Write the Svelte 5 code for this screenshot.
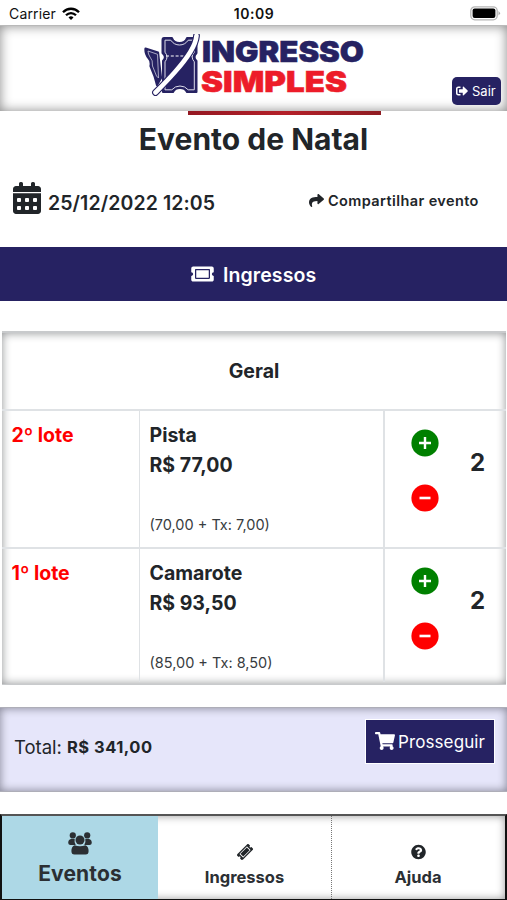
<script>
  const tickets = [
    { lot: '2º lote', name: 'Pista', price: 'R$ 77,00', detail: '(70,00 + Tx: 7,00)', qty: 2 },
    { lot: '1º lote', name: 'Camarote', price: 'R$ 93,50', detail: '(85,00 + Tx: 8,50)', qty: 2 }
  ];
  const days = [[64, 268], [192, 268], [320, 268], [64, 396], [192, 396], [320, 396]];
  const ticketPath =
    'M128 160h320v192H128V160zm400 96c0 26.51 21.49 48 48 48v96c0 26.51-21.49 48-48 48H48c-26.51 0-48-21.49-48-48v-96c26.51 0 48-21.49 48-48s-21.49-48-48-48v-96c0-26.51 21.49-48 48-48h480c26.51 0 48 21.49 48 48v96c-26.51 0-48 21.49-48 48zm-48-104c0-13.255-10.745-24-24-24H120c-13.255 0-24 10.745-24 24v208c0 13.255 10.745 24 24 24h336c13.255 0 24-10.745 24-24V152z';
</script>

<div class="app">
  <div class="status">
    <div class="carrier">
      <span>Carrier</span>
      <svg width="18" height="14" viewBox="0 0 18 14" fill="none" stroke="#000" stroke-width="2.3">
        <path d="M1 5.2C5.4 .6 12.600 .6 17 5.200" />
        <path d="M4 8.300C6.900 5.400 11.100 5.400 14 8.300" />
        <path d="M6.500 10.400Q9 8.300 11.500 10.400L9 13Z" fill="#000" stroke="none" />
      </svg>
    </div>
    <b>10:09</b>
    <div class="battery">
      <svg width="31" height="15" viewBox="0 0 31 15">
        <rect x=".8" y=".8" width="26.400" height="13" rx="4" fill="#fff" stroke="#b5b5b5" stroke-width="1.300" />
        <rect x="2.600" y="2.500" width="22.800" height="9.600" rx="2" />
        <path d="M28.500 5v4.500q3-2.200 0-4.500z" fill="#aaa" />
      </svg>
    </div>
  </div>

  <header>
    <svg class="logo" width="224" height="66" viewBox="0 0 224 66">
      <g stroke="#262262" stroke-linejoin="round">
        <path d="M1.500 14.500L14 18.500 17 44 13 51 10.500 42 6.500 32Q7.500 27 4.500 24Q1 20 1.500 14.500Z" fill="#262262" stroke-width="2.200" />
        <path d="M4 17L13.500 20.300 14.500 44 12.500 42 8.500 32Q9 26 6 23Q4 20 4 17Z" fill="none" stroke="#c9c8dc" stroke-width=".8" />
        <path d="M20 4H28Q30 9 35.500 9Q41 9 43 4H52.500V19Q48.500 23 52.500 27V58H43Q41 54 36 54Q31 54 29 58H19V27Q23 23 18.500 19V6Q18.500 4 20 4Z" fill="#262262" stroke-width="2" />
        <path d="M21 6.200H26.800Q30 11 35.500 11Q41 11 44.200 6.200H50.300V18.200Q46 23 50.300 27.800V55.800H44.200Q41 52 36 52Q31 52 27.800 55.800H21V27.800Q25 23 21 18.200Z" fill="#262262" stroke="#dddcea" stroke-width="1" />
        <path d="M22 22H48" stroke="#fff" stroke-width="1.100" stroke-dasharray="3 1.800" />
        <path d="M52.500 1.800C51.500 14 40 28 30.500 38.500C23 47 17 53 11.500 58.500" fill="none" stroke-width="6.800" stroke-linecap="round" />
        <path d="M52.500 1.800C51.500 14 40 28 30.500 38.500C23 47 17 53 11.500 58.500" fill="none" stroke="#fff" stroke-width="4.600" stroke-linecap="round" />
      </g>
      <text x="58" y="27.800" textLength="162" lengthAdjust="spacingAndGlyphs" fill="#262262" stroke="#262262" stroke-width=".5">INGRESSO</text>
      <text x="57" y="57.500" textLength="146" lengthAdjust="spacingAndGlyphs" fill="#ed1c29" stroke="#ed1c29" stroke-width=".5">SIMPLES</text>
    </svg>
    <button class="exit">
      <svg width="12" height="12" viewBox="0 0 512 512" fill="#fff"><path d="M497 273L329 441c-15 15-41 4.500-41-17v-96H152c-13.300 0-24-10.700-24-24v-96c0-13.300 10.700-24 24-24h136V88c0-21.400 25.900-32 41-17l168 168c9.300 9.400 9.300 24.600 0 34zM192 436v-40c0-6.600-5.400-12-12-12H96c-17.700 0-32-14.300-32-32V160c0-17.700 14.300-32 32-32h84c6.600 0 12-5.400 12-12V76c0-6.600-5.400-12-12-12H96c-53 0-96 43-96 96v192c0 53 43 96 96 96h84c6.600 0 12-5.400 12-12z" /></svg>
      <span>Sair</span>
    </button>
  </header>

  <div class="banner"></div>
  <h1><span>Evento de Natal</span></h1>

  <div class="meta">
    <svg width="28" height="32" viewBox="0 0 448 512" fill="#212529">
      <path d="M0 464c0 26.500 21.500 48 48 48h352c26.500 0 48-21.500 48-48V180H0zM400 64h-48V24a24 24 0 0 0-24-24h-16a24 24 0 0 0-24 24v40H160V24a24 24 0 0 0-24-24h-16a24 24 0 0 0-24 24v40H48C21.500 64 0 85.500 0 112v48h448v-48c0-26.500-21.500-48-48-48z" />
      {#each days as [x, y]}
        <rect {x} y={y - 14} width="64" height="64" rx="14" fill="#fff" />
      {/each}
    </svg>
    <span class="date">25/12/2022 12:05</span>
    <div class="share">
      <svg width="15" height="15" viewBox="0 0 512 512" fill="#212529"><path d="M503.691 189.836L327.687 37.851C312.281 24.546 288 35.347 288 56.015v80.053C127.371 137.907 0 170.100 0 322.326c0 61.441 39.581 122.309 83.333 154.132 13.653 9.931 33.111-2.533 28.077-18.631C66.066 312.814 132.917 274.316 288 272.085V360c0 20.700 24.300 31.453 39.687 18.164l176.004-152c11.071-9.562 11.086-26.753 0-36.328z" /></svg>
      <span>Compartilhar evento</span>
    </div>
  </div>

  <div class="section">
    <svg width="23" height="20" viewBox="0 0 576 512" fill="#fff"><path d={ticketPath} /></svg>
    <span>Ingressos</span>
  </div>

  <div class="table">
    <div class="sector">Geral</div>
    {#each tickets as t}
      <div class="row">
        <div class="lot">{t.lot}</div>
        <div class="info">
          <div class="name">{t.name}</div>
          <div class="price">{t.price}</div>
          <div class="detail">{t.detail}</div>
        </div>
        <div class="qty">
          <div class="steps">
            <svg width="28" height="28" viewBox="0 0 28 28"><circle cx="14" cy="14" r="13.600" fill="#008000" /><path d="M14 8v12M8 14h12" stroke="#fff" stroke-width="2.400" /></svg>
            <svg width="28" height="28" viewBox="0 0 28 28"><circle cx="14" cy="14" r="13.600" fill="#f00" /><path d="M8.500 14h11" stroke="#fff" stroke-width="2.600" /></svg>
          </div>
          <b>{t.qty}</b>
        </div>
      </div>
    {/each}
  </div>

  <div class="total">
    <div class="sum"><span>Total:</span><b>R$ 341,00</b></div>
    <button class="go">
      <svg width="20" height="18" viewBox="0 0 576 512" fill="#fff"><path d="M528.120 301.319l47.273-208C578.806 78.301 567.391 64 551.990 64H159.208l-9.166-44.810C147.758 8.021 137.930 0 126.529 0H24C10.745 0 0 10.745 0 24v16c0 13.255 10.745 24 24 24h69.883l70.248 343.435C147.325 417.100 136 435.222 136 456c0 30.928 25.072 56 56 56s56-25.072 56-56c0-15.674-6.447-29.835-16.824-40h209.647C430.447 426.165 424 440.326 424 456c0 30.928 25.072 56 56 56s56-25.072 56-56c0-22.172-12.888-41.332-31.579-50.405l5.517-24.276c3.413-15.018-8.002-29.319-23.403-29.319H218.117l-6.545-32h293.145c11.206 0 20.920-7.754 23.403-18.681z" /></svg>
      <span>Prosseguir</span>
    </button>
  </div>

  <nav>
    <div class="tab active">
      <svg width="24" height="23" viewBox="0 0 24 23" fill="#2b2f33">
        <circle cx="4.800" cy="3.400" r="3.100" />
        <circle cx="19.200" cy="3.400" r="3.100" />
        <circle cx="12" cy="8" r="4.500" />
        <path d="M6.700 7.100H3Q.2 7.600 .2 11Q.4 13 2.500 13H7.700Q6 10 6.700 7.100ZM17.300 7.100H21Q23.800 7.600 23.800 11Q23.600 13 21.500 13H16.300Q18 10 17.300 7.100ZM6.700 13.200Q9 14.200 12 14.200Q15 14.200 17.300 13.200Q20.600 14.500 20.600 19Q20.600 22.500 17.600 22.500H6.400Q3.400 22.500 3.400 19Q3.400 14.500 6.700 13.200Z" />
      </svg>
      <span>Eventos</span>
    </div>
    <div class="tab">
      <svg width="18" height="18" viewBox="0 0 18 18">
        <g transform="rotate(-45 9 9) translate(.9 3.800) scale(.0281 .0205)" fill="#212529"><path d={ticketPath} /></g>
      </svg>
      <span>Ingressos</span>
    </div>
    <div class="tab">
      <svg width="15" height="18" viewBox="0 0 512 512" fill="#212529"><path d="M504 256c0 136.997-111.043 248-248 248S8 392.997 8 256C8 119.083 119.043 8 256 8s248 111.083 248 248zM262.655 90c-54.497 0-89.255 22.957-116.549 63.758-3.536 5.286-2.353 12.415 2.715 16.258l34.699 26.310c5.205 3.947 12.621 3.008 16.665-2.122 17.864-22.658 30.113-35.797 57.303-35.797 20.429 0 45.698 13.148 45.698 32.958 0 14.976-12.363 22.667-32.534 33.976C247.128 238.528 216 254.941 216 296v4c0 6.627 5.373 12 12 12h56c6.627 0 12-5.373 12-12v-1.333c0-28.462 83.186-29.647 83.186-106.667 0-58.002-60.165-102-116.531-102zM256 338c-25.365 0-46 20.635-46 46 0 25.364 20.635 46 46 46s46-20.636 46-46c0-25.365-20.635-46-46-46z" /></svg>
      <span>Ajuda</span>
    </div>
  </nav>
</div>

<style>
  * { box-sizing: border-box; }
  .app {
    width: 507px;
    height: 900px;
    overflow: hidden;
    display: flex;
    flex-direction: column;
    background: #fff;
    color: #212529;
    font-family: Inter, "Liberation Sans", sans-serif;
    white-space: nowrap;
  }
  svg { display: block; flex: none; }
  button { border: 0; font-family: inherit; color: #fff; background: #262262; }
  .status { height: 25px; display: flex; align-items: center; padding: 2px 6px 0 9px; flex: none; color: #111; }
  .carrier { width: 210px; display: flex; gap: 6px; align-items: center; font-size: 14px; letter-spacing: .15px; }
  .status b { width: 70px; text-align: center; font-size: 14px; font-weight: 600; letter-spacing: .55px; }
  .battery { flex: 1; display: flex; justify-content: flex-end; }
  header {
    height: 86px;
    flex: none;
    display: flex;
    justify-content: space-between;
    align-items: flex-start;
    padding: 8px 6px 0 144px;
    background: #fff;
    border-top: 1px solid #b9b9b9;
    box-shadow: inset 0 0 12px 0 #888;
  }
  .logo { font-weight: 900; font-size: 28.500px; }
  .exit { width: 49px; height: 28px; margin-top: 43px; border-radius: 5px; display: flex; align-items: center; gap: 4px; padding: 0 0 0 4px; font-size: 13px; }
  .banner { width: 193px; height: 4px; margin-left: 188px; background: linear-gradient(90deg, #941822, #b42029 50%, #8f1c22); flex: none; }
  h1 { margin: 0; height: 47px; text-align: center; font-size: 30px; line-height: 48px; font-weight: 700; flex: none; }
  .meta { height: 85px; flex: none; display: flex; align-items: flex-start; padding: 20px 0 0 13px; }
  .date { margin: 9px 0 0 7px; width: 261px; font-size: 19.500px; line-height: 24px; font-weight: 600; letter-spacing: .1px; }
  .share { display: flex; align-items: center; gap: 4px; margin-top: 9px; font-size: 14.500px; line-height: 20px; font-weight: 600; letter-spacing: .4px; }
  .share svg { margin-top: -2px; }
  .section { height: 54px; flex: none; background: #262262; color: #fff; display: flex; align-items: center; padding: 1px 0 0 191px; gap: 9px; font-size: 19.500px; font-weight: 600; letter-spacing: .1px; }
  .section svg { margin-top: -2px; }
  .table {
    width: 504px;
    height: 354px;
    margin: 30px 0 0 2px;
    flex: none;
    border-top: 2px solid #c8cacc;
    border-bottom: 1px solid #c8cacc;
    box-shadow: inset 0 0 10px 0 #8e9092;
    font-weight: 650;
  }
  .sector { height: 76px; text-align: center; font-size: 19.500px; line-height: 76px; }
  .row { height: 138px; display: flex; border-top: 2px solid #dfe2e5; font-size: 19.500px; line-height: 29.500px; }
  .row:last-child { height: 135px; }
  .lot { width: 137px; padding: 10px 0 0 9.500px; color: #f00; }
  .info { width: 246px; padding: 10px 0 0 9.500px; border-left: 1px solid #dfe2e5; border-right: 2px solid #dfe2e5; }
  .detail { margin-top: 30px; font-size: 14.500px; font-weight: 400; color: #383c40; }
  .qty { display: flex; padding: 18px 0 0 26px; }
  .steps { display: flex; flex-direction: column; gap: 27px; }
  .qty b { margin: 19px 0 0 31px; font-size: 24px; font-weight: 650; }
  .total {
    height: 85px;
    margin-top: 22px;
    flex: none;
    display: flex;
    justify-content: space-between;
    padding: 13px 13px 0 14px;
    background: #e6e6fa;
    border-top: 1px solid #aeaeb8;
    border-bottom: 1px solid #aeaeb8;
    box-shadow: inset 0 0 10px 0 #808090;
  }
  .sum { display: flex; gap: 5px; height: 52px; align-items: center; font-size: 18.500px; }
  .sum b { font-size: 16.500px; font-weight: 700; letter-spacing: .5px; }
  .go { width: 128px; height: 43px; margin-top: -1px; display: flex; align-items: center; padding: 0 0 0 9px; gap: 3px; font-size: 17px; letter-spacing: .1px; box-shadow: 0 0 0 1px #fff; }
  .go svg { margin-top: -2px; }
  nav { height: 86px; margin-top: 22px; flex: none; display: flex; border: 2px solid #111; border-top-color: #555; border-bottom-width: 1px; box-shadow: inset 0 0 9px 0 #999; }
  .tab { width: 173px; display: flex; flex-direction: column; align-items: center; padding-top: 27px; gap: 3px; font-size: 16.500px; line-height: 26px; font-weight: 700; color: #2b2f33; }
  .tab + .tab + .tab { border-left: 1px dotted #777; }
  .active { width: 156px; background: #add8e6; padding-top: 16px; gap: 6px; font-size: 21px; letter-spacing: .15px; }
</style>
